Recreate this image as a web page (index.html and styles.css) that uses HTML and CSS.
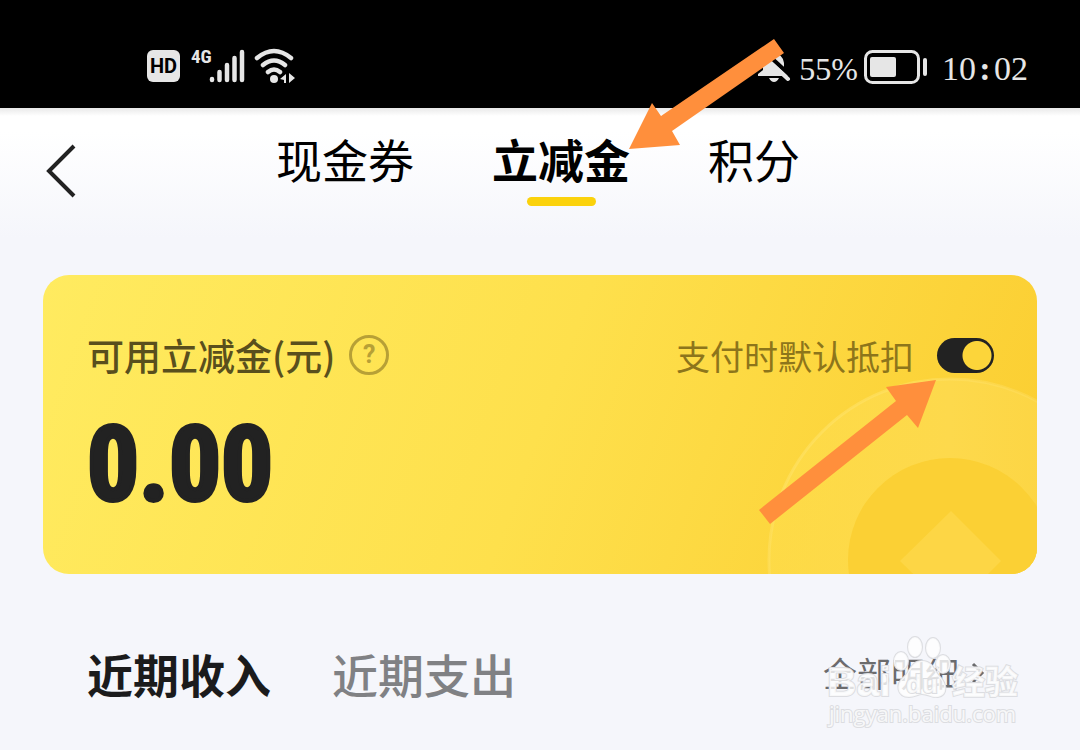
FILE: index.html
```html
<!DOCTYPE html>
<html lang="zh-CN">
<head>
<meta charset="utf-8">
<meta name="viewport" content="width=device-width, initial-scale=1">
<title>立减金</title>
<link rel="stylesheet" href="styles.css">
</head>
<body>
<div class="status">
  <div class="status-group">
    <span class="hd">HD</span>
    <span class="network">4G</span>
    <svg class="signal" width="36" height="34" viewBox="0 0 36 34" fill="none" stroke="currentColor" stroke-width="4.500" stroke-linecap="round" aria-hidden="true">
      <path d="M3 30V31M10.500 23V31M18 16V31M25.500 9V31M33 3V31"/>
    </svg>
    <svg class="wifi" width="42" height="36" viewBox="0 0 42 36" aria-hidden="true">
      <g fill="none" stroke="currentColor" stroke-width="4.500" stroke-linecap="round">
        <path d="M3 10Q20 -4 37 10M9 17Q20 8 31 17M14 24Q20 19 26 24"/>
      </g>
      <circle cx="20" cy="31" r="4" fill="currentColor"/>
      <path d="M32 26V35H30V32L26 31ZM35 25L41 30L35 35Z" fill="currentColor"/>
    </svg>
  </div>
  <div class="status-group status-right">
    <svg class="bell" width="34" height="36" viewBox="0 0 34 36" aria-hidden="true">
      <path d="M1 28V26L6 22V15Q7 6 16 5Q26 6 27 15V22L31 28Z" fill="currentColor"/>
      <path d="M12 30H22Q20 34 17 34Q14 34 12 30Z" fill="currentColor"/>
      <path d="M9 5L34 28" stroke="#000" stroke-width="4"/>
      <path d="M6 8L31 31" stroke="currentColor" stroke-width="4" stroke-linecap="round"/>
    </svg>
    <span class="percent">55%</span>
    <svg class="battery" width="64" height="34" viewBox="0 0 64 34" aria-hidden="true">
      <rect x="1.500" y="1.500" width="53" height="31" rx="7" fill="none" stroke="currentColor" stroke-width="3"/>
      <rect x="6" y="7" width="26" height="20" rx="2" fill="currentColor"/>
      <rect x="59" y="8" width="4" height="18" rx="2" fill="currentColor"/>
    </svg>
    <span class="clock"><span>10</span><span class="colon">:</span><span>02</span></span>
  </div>
</div>

<header class="header">
  <button class="back" type="button" aria-label="返回">
    <svg width="32" height="54" viewBox="0 0 32 54" fill="none" stroke="#222" stroke-width="4"><path d="M29 2L4 27L29 52"/></svg>
  </button>
  <nav class="tabs">
    <button class="tab" type="button">现金券</button>
    <button class="tab tab-active" type="button">立减金
      <svg class="arrow arrow-tab" width="158" height="114" viewBox="0 0 158 114" aria-hidden="true"><path d="M1 112L24 66L33 79L146 2L156 16L44 94L52 108Z"/></svg>
    </button>
    <button class="tab" type="button">积分</button>
  </nav>
</header>

<main class="main">
  <section class="card">
    <svg class="coin" width="270" height="200" viewBox="0 0 270 200" aria-hidden="true">
      <defs>
        <linearGradient id="ring" x1="0" y1="0" x2="1" y2="1">
          <stop offset="0" stop-color="#ffe468" stop-opacity=".7"/>
          <stop offset=".6" stop-color="#ffe070" stop-opacity=".1"/>
        </linearGradient>
        <linearGradient id="face" x1="0" y1="0" x2="1" y2="0">
          <stop offset="0" stop-color="#fedd4c" stop-opacity=".6"/>
          <stop offset=".5" stop-color="#fdd94c"/>
          <stop offset="1" stop-color="#fcd23c"/>
        </linearGradient>
      </defs>
      <circle cx="183" cy="186" r="181" fill="url(#face)" stroke="url(#ring)" stroke-width="3"/>
      <circle cx="183" cy="186" r="102" fill="#fbd034"/>
      <path d="M184 137L234 187L184 237L133 187Z" fill="#fdd645"/>
    </svg>
    <div class="card-top">
      <div class="label">可用立减金(元)
        <button class="help" type="button" aria-label="说明">?</button>
      </div>
      <div class="deduct">
        <label for="deduct">支付时默认抵扣</label>
        <input class="switch" id="deduct" type="checkbox" role="switch" checked>
      </div>
    </div>
    <div class="amount">0.00</div>
    <svg class="arrow arrow-switch" width="180" height="148" viewBox="0 0 180 148" aria-hidden="true"><path d="M178 2L128 9L138 23L1 132L12 146L149 37L160 50Z"/></svg>
  </section>

  <section class="records">
    <button class="record record-active" type="button">近期收入</button>
    <button class="record" type="button">近期支出</button>
    <a class="all" href="#">全部明细
      <svg width="14" height="22" viewBox="0 0 14 22" fill="none" stroke="currentColor" stroke-width="3" aria-hidden="true"><path d="M2 2L11 11L2 20"/></svg>
    </a>
    <svg class="watermark" width="200" height="96" viewBox="0 0 200 96" aria-label="Baidu经验">
      <g class="mark">
        <ellipse cx="77" cy="27" rx="7" ry="9"/>
        <ellipse cx="91" cy="13" rx="7" ry="10"/>
        <ellipse cx="109" cy="14" rx="7" ry="10"/>
        <ellipse cx="119" cy="30" rx="7" ry="9"/>
        <path d="M98 27C87 27 86 38 80 43C71 50 73 63 85 63C91 63 94 60 98 60C104 60 108 64 114 63C124 61 123 50 116 43C110 37 109 27 98 27Z"/>
      </g>
      <g class="mark mark-name">
        <text x="3" y="62">Bai</text>
        <text class="mark-small" x="82" y="59">du</text>
        <text class="mark-cn" x="128" y="60">经验</text>
      </g>
      <text class="mark mark-url" x="5" y="88">jingyan.baidu.com</text>
    </svg>
  </section>
</main>
</body>
</html>
```
FILE: styles.css
```css
* { box-sizing: border-box; }

body {
  margin: 0;
  min-height: 100vh;
  background: #f5f6fb;
  color: #222;
  font-family: "Liberation Sans", "Noto Sans CJK SC", sans-serif;
}

button {
  margin: 0;
  padding: 0;
  border: 0;
  background: none;
  color: inherit;
  font-family: "Noto Sans CJK SC", sans-serif;
}

svg { display: block; flex: none; }

.status {
  display: flex;
  justify-content: space-between;
  align-items: flex-end;
  height: 108px;
  padding: 0 52px 24px 147px;
  background: #000;
  color: #e6e6e6;
}

.status-group { display: flex; align-items: flex-end; }

.hd {
  width: 33px;
  height: 32px;
  margin-bottom: 2px;
  border-radius: 6px;
  background: #e6e6e6;
  color: #000;
  font: 700 20px/32px Roboto, sans-serif;
  text-align: center;
}

.network {
  align-self: flex-start;
  width: 18px;
  margin-left: 11px;
  font: 700 19px/18px "Roboto Condensed", Roboto, sans-serif;
}

.signal { margin-bottom: 1px; }
.wifi { margin-left: 9px; }

.percent {
  margin-left: 8px;
  font: 32px/30px "Liberation Serif", serif;
}

.battery { margin: 0 14px 0 6px; }

.clock {
  display: flex;
  font: 34px/30px "Liberation Serif", serif;
}

.colon {
  width: 18px;
  text-align: center;
  font-weight: 700;
}

.header {
  position: relative;
  display: flex;
  justify-content: center;
  height: 167px;
  padding: 24px 4px 0 0;
  background: linear-gradient(#e9e9e9, #fff 8px, #fff 24px, #f5f6fb 130px);
}

.back {
  position: absolute;
  left: 45px;
  top: 36px;
}

.tabs { display: flex; align-items: flex-start; gap: 78px; }

.tab {
  position: relative;
  color: #000;
  font-size: 46px;
  line-height: 52px;
}

.tab-active { font-weight: 700; }

.tab-active::after {
  content: "";
  display: block;
  width: 69px;
  height: 9px;
  margin: 13px auto 0;
  border-radius: 5px;
  background: #fbd20c;
}

.arrow {
  position: absolute;
  z-index: 1;
  fill: #ff8f3c;
  pointer-events: none;
}

.arrow-tab { left: 100%; bottom: 55px; margin-left: -2px; }

.main { padding: 0 43px; }

.card {
  position: relative;
  min-height: 299px;
  padding: 60px 43px 40px 44px;
  border-radius: 26px;
  background: linear-gradient(110deg, #ffeb60, #fee04c 50%, #fbcd30);
}

.coin {
  position: absolute;
  right: 0;
  bottom: 0;
  border-bottom-right-radius: 26px;
}

.card-top {
  position: relative;
  display: flex;
  justify-content: space-between;
  align-items: center;
  height: 40px;
}

.label {
  display: flex;
  align-items: center;
  gap: 14px;
  color: #594f1d;
  font-family: "Noto Sans CJK SC", sans-serif;
  font-size: 37px;
  font-weight: 500;
}

.help {
  width: 40px;
  height: 40px;
  border: 3px solid #b7a036;
  border-radius: 50%;
  color: #b7a036;
  font: 700 25px/34px Roboto, sans-serif;
}

.deduct {
  display: flex;
  align-items: center;
  gap: 23px;
  color: #8d751b;
  font-family: "Noto Sans CJK SC", sans-serif;
  font-size: 34px;
}

.switch {
  appearance: none;
  width: 57px;
  height: 35px;
  margin: 0;
  border-radius: 18px;
  background: radial-gradient(circle at 40px 50%, #fcd53a 14px, #222 15px);
}

.amount {
  position: relative;
  margin-top: 34px;
  color: #222;
  font: 700 103px/112px "Roboto Condensed", Roboto, sans-serif;
  -webkit-text-stroke: 4px #222;
}

.arrow-switch { right: 99px; top: 103px; }

.records {
  position: relative;
  display: flex;
  align-items: center;
  gap: 61px;
  padding: 66px 52px 40px 44px;
}

.record {
  color: #808184;
  font-size: 46px;
  font-weight: 500;
  line-height: 66px;
}

.record-active { color: #1b1b1c; font-weight: 700; }

.all {
  display: flex;
  align-items: center;
  gap: 12px;
  margin-left: auto;
  color: #6b6b6d;
  font-family: "Noto Sans CJK SC", sans-serif;
  font-size: 34px;
  line-height: 60px;
  text-decoration: none;
}

.watermark {
  position: absolute;
  right: 13px;
  top: 60px;
  pointer-events: none;
}

.mark {
  fill: rgba(255, 255, 255, .8);
  stroke: #dcdde1;
  stroke-width: 2px;
  paint-order: stroke;
}

.mark-name { font: 700 41px "Liberation Sans", "Noto Sans CJK SC", sans-serif; }
.mark-small { font-size: 26px; }
.mark-cn { font-size: 33px; }
.mark-url { font: 22px "Open Sans", sans-serif; }
```
